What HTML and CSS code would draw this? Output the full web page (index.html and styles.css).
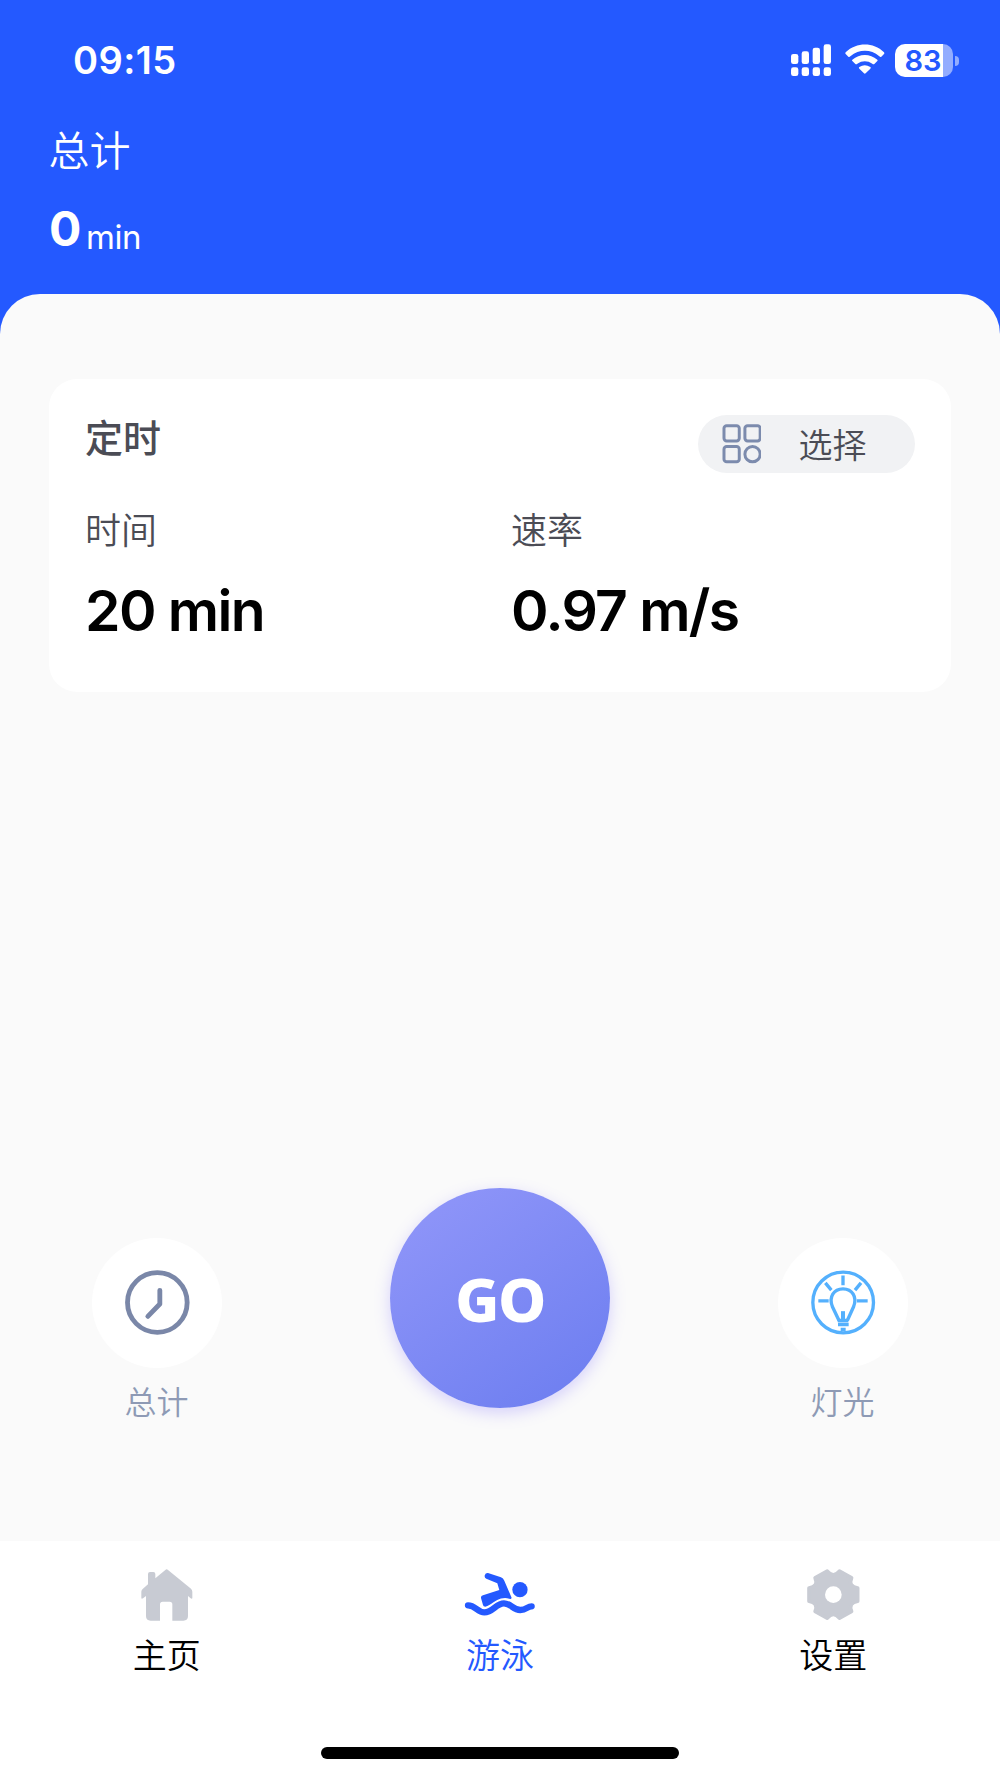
FILE: index.html
```html
<!DOCTYPE html>
<html lang="zh-CN">
<head>
<meta charset="utf-8">
<title>游泳</title>
<link rel="stylesheet" href="styles.css">
</head>
<body>
<div class="app">
  <header class="header">
    <div class="status">
      <span class="clock">09:15</span>
      <div class="status-icons">
        <svg class="signal" viewBox="63 73 120 97" fill="#fff">
          <rect x="63" y="103" width="22" height="30" rx="7"/><rect x="95" y="95" width="22" height="38" rx="7"/><rect x="128" y="84" width="22" height="49" rx="7"/><rect x="161" y="74" width="22" height="59" rx="7"/>
          <rect x="63" y="143" width="22" height="26" rx="7"/><rect x="95" y="143" width="22" height="26" rx="7"/><rect x="128" y="143" width="22" height="26" rx="7"/><rect x="161" y="143" width="22" height="26" rx="7"/>
        </svg>
        <svg class="wifi" viewBox="223 73 120 92" fill="#fff">
          <path d="M225 98C258 67 308 67 340 98Q342 101 340 103L332 111Q329 113 326 110C300 88 266 88 239 110Q236 113 233 111L225 103Q223 101 225 98Z"/>
          <path d="M245 120C267 101 298 101 320 120Q322 122 320 124L311 133Q308 135 305 132C291 122 274 122 260 132Q257 135 254 133L245 124Q243 122 245 120Z"/>
          <path d="M266 142Q282 131 299 142Q302 144 299 147L285 161Q282 163 280 161L266 147Q263 144 266 142Z"/>
        </svg>
        <div class="battery"><span class="battery-level">83</span></div>
      </div>
    </div>
    <div class="total-label">总计</div>
    <div class="total"><span class="total-value">0</span><span class="total-unit">min</span></div>
  </header>

  <main class="sheet">
    <section class="card">
      <div class="card-head">
        <h2 class="card-title">定时</h2>
        <button class="picker">
          <svg class="picker-icon" viewBox="695 161 119 119" fill="none" stroke="#7c8bad" stroke-width="9">
            <rect x="701" y="166" width="46" height="46" rx="8"/><rect x="764" y="166" width="46" height="46" rx="8"/><rect x="701" y="229" width="46" height="46" rx="8"/><circle cx="787" cy="252" r="23"/>
          </svg>
          <span>选择</span>
        </button>
      </div>
      <div class="metrics">
        <div><div class="metric-label">时间</div><div class="metric-value">20 min</div></div>
        <div><div class="metric-label">速率</div><div class="metric-value">0.97 m/s</div></div>
      </div>
    </section>

    <div class="controls">
      <div class="control">
        <div class="control-disc">
          <svg class="control-icon" viewBox="165.500 150 195 195" fill="none" stroke="#7a87a8" stroke-width="14.500" stroke-linecap="round" stroke-linejoin="round">
            <circle cx="262.500" cy="247.500" r="89.500"/><path d="M270 211V252L234 289"/>
          </svg>
        </div>
        <span class="control-label">总计</span>
      </div>
      <button class="go">GO</button>
      <div class="control">
        <div class="control-disc">
          <svg class="control-icon" viewBox="153 150.500 195 195" fill="none" stroke="#54b0fd" stroke-width="10">
            <circle cx="249.500" cy="248" r="91"/>
            <path d="M249 167V196M196 189L214 211M303 189L285 211M175 243H206M291 243H323"/>
            <path d="M237 302L217 260C206 232 221 207 249 207S292 232 281 260L262 302"/>
            <path d="M233 302H265M234 314H266M242 329H257"/>
            <path d="M249 274V303" stroke-width="12"/>
          </svg>
        </div>
        <span class="control-label">灯光</span>
      </div>
    </div>
  </main>

  <footer class="tabbar">
    <nav class="tabs">
      <a class="tab">
        <span class="tab-icon"><svg width="52" height="52" viewBox="123 115 156 156" fill="#c8cbd3"><path d="M196 118Q200 114 204 118L273 174Q277 178 277 183V203Q275 206 271 202L264 196V256Q264 270 250 270H217V221Q217 213 209 213H188Q180 213 180 221V270H152Q138 270 138 256V196L129 203Q124 206 124 201V183Q124 178 128 175L144 161V130Q144 124 150 124H160Q166 124 166 130V143Z"/></svg></span>
        <span>主页</span>
      </a>
      <a class="tab active">
        <span class="tab-icon"><svg width="73.300" height="48.300" viewBox="100 120 220 145" fill="#2459ff"><path d="M115 226C138 226 143 247 164 247C190 247 199 220 223 220C244 220 250 240 272 240C291 240 293 229 306 229" fill="none" stroke="#2459ff" stroke-width="19" stroke-linecap="round"/><circle cx="271" cy="179" r="23"/><path d="M175 129L214 142Q221 145 224 152L245 201Q248 209 239 206C215 199 198 213 184 222Q174 229 167 230Q161 230 160 225L154 204Q153 198 160 196L209 180L203 160L170 146A9 9 0 0 1 175 129Z"/></svg></span>
        <span>游泳</span>
      </a>
      <a class="tab">
        <span class="tab-icon"><svg width="54.700" height="53.300" viewBox="138 112 164 160"><g transform="translate(220 192) scale(1 .96)"><path d="M73 21Q44 25.400 54.700 52.700L18.300 73.700Q0 50.800-18.300 73.700L-54.700 52.700Q-44 25.400-73 21V-21Q-44-25.400-54.700-52.700L-18.300-73.700Q0-50.800 18.300-73.700L54.700-52.700Q44-25.400 73-21Z" fill="#c8cbd3" stroke="#c8cbd3" stroke-width="11" stroke-linejoin="round"/><ellipse rx="25" ry="26" fill="#fff"/></g></svg></span>
        <span>设置</span>
      </a>
    </nav>
    <div class="home-indicator"></div>
  </footer>
</div>
</body>
</html>
```
FILE: styles.css
```css
* { box-sizing: border-box; }

body {
  margin: 0;
  font-family: Inter, "Noto Sans CJK SC", sans-serif;
}

button { border: 0; padding: 0; font-family: inherit; }
svg { display: block; }

.app {
  display: flex;
  flex-direction: column;
  width: 1000px;
  height: 1778px;
  background: #2459ff;
}

.header { height: 294px; color: #fff; }

.status {
  display: flex;
  align-items: center;
  justify-content: space-between;
  height: 120px;
  padding: 0 47px 0 73px;
}
.clock { font-size: 38px; font-weight: 600; line-height: 48px; letter-spacing: 0.4px; }
.status-icons { display: flex; align-items: center; }
.signal { width: 40px; height: 32.300px; margin-right: 13.500px; }
.wifi { width: 40px; height: 30.700px; margin: 0 10.500px 1px 0; }
.battery {
  position: relative;
  width: 58px;
  height: 33px;
  border-radius: 10px;
  background: linear-gradient(90deg, #fff 83%, #92acff 83%);
  text-align: center;
}
.battery::after {
  content: "";
  position: absolute;
  left: 60px;
  top: 12px;
  width: 4px;
  height: 10px;
  border-radius: 0 5px 5px 0;
  background: #92acff;
}
.battery-level { display: block; padding-right: 2px; font-size: 29px; font-weight: 600; line-height: 33px; color: #2459ff; }

.total-label { padding: 1px 0 0 48.500px; font-size: 41px; font-weight: 350; line-height: 60px; }
.total { display: flex; align-items: flex-start; margin-top: 18px; padding-left: 49px; line-height: 60px; }
.total-value { width: 32px; font-size: 48px; font-weight: 650; letter-spacing: -1px; }
.total-unit { padding-top: 8px; margin-left: 5px; font-size: 33px; font-weight: 400; line-height: 60px; letter-spacing: -0.500px; }

.sheet {
  flex: 1;
  display: flex;
  flex-direction: column;
  justify-content: space-between;
  padding: 84.500px 49px 119.500px 48.500px;
  border-radius: 40px 40px 0 0;
  background: #fafafa;
}

.card {
  height: 313.500px;
  padding: 36.500px 36px 36px 36.500px;
  border-radius: 28px;
  background: #fff;
}
.card-head { display: flex; justify-content: space-between; align-items: flex-start; }
.card-title { margin: 0; padding-top: 1px; font-size: 38px; font-weight: 500; line-height: 44px; color: #4b4c55; }
.picker {
  display: flex;
  align-items: center;
  width: 217px;
  height: 57.500px;
  padding-left: 23.500px;
  border-radius: 29px;
  background: #f1f2f4;
  font-size: 34px;
  font-weight: 350;
  color: #4b4c55;
}
.picker-icon { width: 39.500px; height: 39.500px; margin-right: 37.500px; }

.metrics { display: grid; grid-template-columns: 426px 1fr; margin-top: 38px; }
.metric-label { font-size: 36px; font-weight: 350; line-height: 40px; color: #4b4c55; }
.metric-value { margin-top: 30px; font-size: 57px; font-weight: 600; line-height: 60px; letter-spacing: -1.600px; color: #000; }

.controls { display: flex; justify-content: space-between; padding: 0 43px 0 43.500px; }
.control { display: flex; flex-direction: column; align-items: center; width: 130px; padding-top: 49.500px; }
.control-disc {
  display: flex;
  align-items: center;
  justify-content: center;
  width: 130px;
  height: 130px;
  border-radius: 50%;
  background: #fff;
}
.control-icon { width: 65px; height: 65px; }
.control-label { margin: 15px 1px -1px 0; font-size: 32px; font-weight: 350; line-height: 40px; color: #8e9ab5; }
.go {
  width: 220px;
  height: 220px;
  border-radius: 50%;
  background: linear-gradient(145deg, #9096f9 5%, #6d7ef0 95%);
  box-shadow: 0 5px 16px rgba(120, 100, 255, 0.28);
  font-family: "Noto Sans", sans-serif;
  font-size: 61px;
  font-weight: 800;
  letter-spacing: -1.500px;
  color: #fff;
}

.tabbar {
  display: flex;
  flex-direction: column;
  align-items: center;
  justify-content: space-between;
  height: 237px;
  padding: 23.500px 0 19px;
  background: #fff;
}
.tabs { display: grid; grid-template-columns: repeat(3, 1fr); width: 100%; }
.tab { display: flex; flex-direction: column; align-items: center; gap: 11px; font-size: 34px; font-weight: 350; line-height: 40px; color: #000; }
.tab.active { color: #2459ff; }
.tab-icon { display: flex; align-items: center; height: 60px; }
.home-indicator { width: 358px; height: 12px; border-radius: 6px; background: #000; }
```
